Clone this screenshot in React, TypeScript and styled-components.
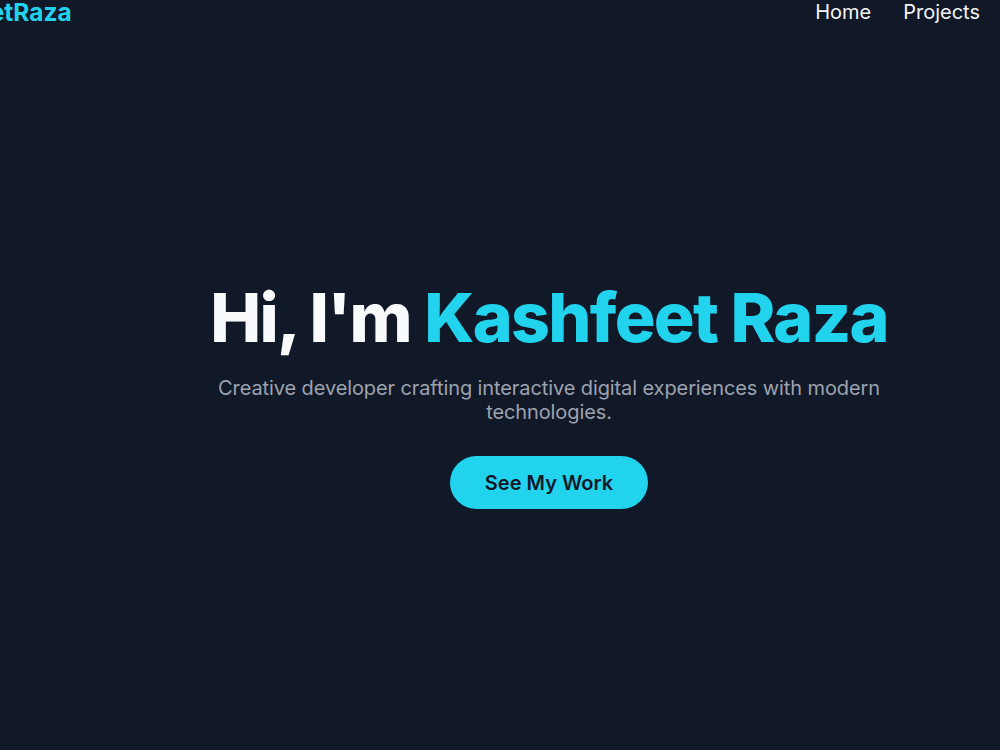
import React from "react";
import styled, { createGlobalStyle } from "styled-components";

const GlobalStyle = createGlobalStyle`
  html, body {
    margin: 0;
    padding: 0;
    background: #111827;
    overflow: hidden;
  }
  body {
    font-family: Inter, "Noto Sans", sans-serif;
  }
`;

export default function App() {
  return (
    <>
      <GlobalStyle />
      <Page>
        <Header>
          <Logo>KashfeetRaza</Logo>
          <Nav>
            <NavLink href="#">Home</NavLink>
            <NavLink href="#">Projects</NavLink>
          </Nav>
        </Header>
        <Hero>
          <Title>
            Hi, I'm <Accent>Kashfeet Raza</Accent>
          </Title>
          <Subtitle>
            Creative developer crafting interactive digital experiences with
            modern technologies.
          </Subtitle>
          <CtaButton>See My Work</CtaButton>
        </Hero>
      </Page>
    </>
  );
}

const Page = styled.div`
  width: 1000px;
  height: 750px;
  background: #111827;
  overflow: hidden;
`;

const Header = styled.header`
  display: flex;
  justify-content: space-between;
  align-items: center;
  height: 24px;
  padding-right: 20px;
`;

const Logo = styled.div`
  margin-left: -95px;
  font-size: 24.5px;
  font-weight: 700;
  color: #22d3ee;
  line-height: 24px;
`;

const Nav = styled.nav`
  display: flex;
  gap: 32px;
`;

const NavLink = styled.a`
  font-size: 20px;
  color: #f3f4f6;
  text-decoration: none;
  line-height: 24px;
`;

const Hero = styled.section`
  display: flex;
  flex-direction: column;
  align-items: center;
  padding-top: 259px;
  padding-left: 98px;
`;

const Title = styled.h1`
  margin: 0;
  font-size: 68px;
  font-weight: 800;
  line-height: 68px;
  color: #f9fafb;
  letter-spacing: -0.025em;
`;

const Accent = styled.span`
  color: #22d3ee;
`;

const Subtitle = styled.p`
  margin: 25px 0 0;
  max-width: 672px;
  font-size: 20px;
  line-height: 24px;
  color: #9ca3af;
  text-align: center;
  letter-spacing: -0.1px;
`;

const CtaButton = styled.button`
  margin-top: 32px;
  padding: 0 35px;
  height: 53px;
  border: none;
  border-radius: 9999px;
  background: #22d3ee;
  color: #111827;
  font-family: Inter, "Noto Sans", sans-serif;
  font-size: 20px;
  font-weight: 600;
  cursor: pointer;
`;
